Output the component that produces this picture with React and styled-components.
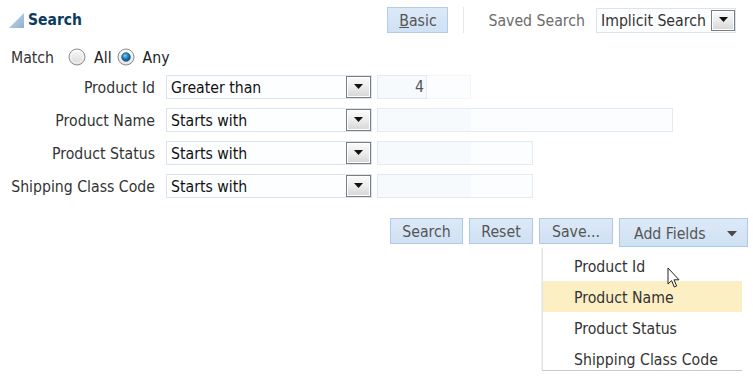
import React from "react";
import styled, { createGlobalStyle } from "styled-components";

const Global = createGlobalStyle`
  html, body { margin: 0; padding: 0; background: #fff; }
  body {
    font-family: "DejaVu Sans Condensed", "DejaVu Sans", sans-serif;
    font-stretch: condensed;
    font-size: 15.7px;
    color: #333;
  }
`;

const Page = styled.div`
  position: relative;
  width: 753px;
  height: 376px;
  padding: 7px 0 0 0;
  box-sizing: border-box;
  overflow: hidden;
`;

const Header = styled.div`
  display: flex;
  align-items: center;
  height: 26px;
  padding-left: 8px;
`;

const Title = styled.div`
  display: flex;
  align-items: center;
  gap: 3px;
  font-weight: bold;
  font-size: 15.5px;
  color: #0b3b5e;
  flex: 1;
`;

const Basic = styled.button`
  font: inherit;
  font-stretch: condensed;
  width: 61px;
  height: 26px;
  margin-right: 15px;
  background: linear-gradient(#dce9f7, #cfe1f4);
  border: 1px solid #b4cde6;
  color: #555;
  padding: 0;
  u { text-decoration: underline; }
`;

const VSep = styled.div`
  width: 1px;
  height: 26px;
  background: #e3e8ec;
  margin-right: 24px;
`;

const SavedLabel = styled.span`
  color: #6b6b6b;
  margin-right: 11px;
`;

const SelectBox = styled.div`
  display: flex;
  align-items: center;
  box-sizing: border-box;
  width: ${(p) => p.$w}px;
  height: ${(p) => p.$h || 24}px;
  border: 1px solid #d9e4ee;
  background: #fdfeff;
  padding-left: 4px;
  color: ${(p) => p.$color || "#111"};
`;

const SelectText = styled.span`
  flex: 1;
  white-space: nowrap;
  overflow: hidden;
`;

const ArrowBtn = styled.span`
  display: flex;
  align-items: center;
  justify-content: center;
  box-sizing: border-box;
  width: ${(p) => p.$w || 25}px;
  height: ${(p) => p.$h || 22}px;
  border: 1px solid #7d7d7d;
  box-shadow: inset 0 0 0 1px #fff;
  background: linear-gradient(#fbfbfb, #ececec 50%, #d6d6d6);
`;

const HeaderRight = styled.div`
  display: flex;
  align-items: center;
  margin-right: 17px;
`;

const MatchRow = styled.div`
  display: flex;
  align-items: center;
  height: 18px;
  margin: 15px 0 0 11px;
  color: #333;
`;

const MatchLabel = styled.span`
  margin-right: 14px;
`;

const RadioLabel = styled.span`
  margin: 0 5px 0 8px;
  color: #222;
`;

const Grid = styled.div`
  display: grid;
  grid-template-columns: 155px 217px auto;
  grid-auto-rows: 24px;
  row-gap: 9px;
  margin-top: 9px;
  align-items: center;
`;

const Label = styled.div`
  text-align: right;
  white-space: nowrap;
  color: #333;
`;

const SelCell = styled.div`
  padding-left: 11px;
  display: flex;
`;

const InputCell = styled.div`
  padding-left: 5px;
  display: flex;
`;

const InputBox = styled.div`
  box-sizing: border-box;
  width: ${(p) => p.$w}px;
  height: 24px;
  border: 1px solid #e3eaf1;
  background: linear-gradient(to right, #f7fafd 0, #f7fafd 93px, #fcfdfe 93px);
  text-align: right;
  padding-right: 2px;
  line-height: 22px;
  color: #555;
`;

const InputTail = styled.div`
  width: 44px;
  height: 24px;
  box-sizing: border-box;
  border: 1px solid #f3f6f9;
  border-left: none;
  background: #fcfdfe;
`;

const ButtonRow = styled.div`
  display: flex;
  gap: 6px;
  margin: 20px 0 0 390px;
  align-items: flex-start;
`;

const Btn = styled.button`
  font: inherit;
  font-stretch: condensed;
  box-sizing: border-box;
  height: ${(p) => p.$h || 26}px;
  width: ${(p) => p.$w}px;
  background: linear-gradient(#dde9f7, #cfe1f4);
  border: 1px solid #b0cae4;
  color: #555;
  display: flex;
  align-items: center;
  justify-content: ${(p) => (p.$split ? "space-between" : "center")};
  padding: ${(p) => (p.$split ? "2px 10px 0 14px" : "0")};
`;

const Menu = styled.div`
  position: absolute;
  left: 542px;
  top: 248px;
  width: 200px;
  height: 122px;
  background: #fff;
  border-left: 1px solid #e2e2e2;
  box-shadow: 0 1px 0 #c9c9c9, -1px 0 0 #f0f0f0;
  padding-top: 2px;
  box-sizing: border-box;
  overflow: hidden;
`;

const MenuItem = styled.div`
  height: 31px;
  line-height: 33px;
  padding-left: 31px;
  color: #333;
  background: ${(p) => (p.$hl ? "#fdefc4" : "transparent")};
  white-space: nowrap;
`;

const Cursor = styled.svg`
  position: absolute;
  left: 667px;
  top: 267px;
`;

const Caret = ({ size = 9, color = "#111" }) => (
  <svg width={size} height={size / 2 + 1} viewBox="0 0 10 6">
    <path d="M0 0 H10 L5 5.5 Z" fill={color} />
  </svg>
);

const Radio = ({ checked }) => (
  <svg width="18" height="18" viewBox="0 0 18 18">
    <defs>
      <linearGradient id={checked ? "rg1" : "rg0"} x1="0" y1="0" x2="0" y2="1">
        <stop offset="0" stopColor="#fafafa" />
        <stop offset="1" stopColor="#d8d8d8" />
      </linearGradient>
      <radialGradient id="dot" cx="0.4" cy="0.35" r="0.7">
        <stop offset="0" stopColor="#7fd0f5" />
        <stop offset="0.5" stopColor="#1c7fc0" />
        <stop offset="1" stopColor="#0c4a80" />
      </radialGradient>
    </defs>
    <circle cx="9" cy="9" r="8" fill={`url(#${checked ? "rg1" : "rg0"})`} stroke="#8e8e8e" strokeWidth="1" />
    <circle cx="9" cy="9" r="6.3" fill="none" stroke="#fff" strokeWidth="0.8" opacity="0.8" />
    {checked && <circle cx="9" cy="9" r="4.3" fill="url(#dot)" stroke="#0b3c66" strokeWidth="0.6" />}
  </svg>
);

const Disclose = () => (
  <svg width="17" height="17" viewBox="0 0 17 17">
    <defs>
      <linearGradient id="tri" x1="0" y1="0" x2="1" y2="1">
        <stop offset="0" stopColor="#c9dbec" />
        <stop offset="1" stopColor="#8fb0cf" />
      </linearGradient>
    </defs>
    <path d="M1 16 H16 V1 Z" fill="url(#tri)" />
  </svg>
);

const rows = [
  { label: "Product Id", op: "Greater than", w: 50, value: "4", tail: true },
  { label: "Product Name", op: "Starts with", w: 296 },
  { label: "Product Status", op: "Starts with", w: 156 },
  { label: "Shipping Class Code", op: "Starts with", w: 156 },
];

export default function App() {
  return (
    <>
      <Global />
      <Page>
        <Header>
          <Title>
            <Disclose />
            <span>Search</span>
          </Title>
          <HeaderRight>
            <Basic>
              <u>B</u>asic
            </Basic>
            <VSep />
            <SavedLabel>Saved Search</SavedLabel>
            <SelectBox $w={140} $h={25} $color="#333">
              <SelectText>Implicit Search</SelectText>
              <ArrowBtn $w={24} $h={21}>
                <Caret />
              </ArrowBtn>
            </SelectBox>
          </HeaderRight>
        </Header>
        <MatchRow>
          <MatchLabel>Match</MatchLabel>
          <Radio />
          <RadioLabel>All</RadioLabel>
          <Radio checked />
          <RadioLabel>Any</RadioLabel>
        </MatchRow>
        <Grid>
          {rows.map((r) => (
            <React.Fragment key={r.label}>
              <Label>{r.label}</Label>
              <SelCell>
                <SelectBox $w={206}>
                  <SelectText>{r.op}</SelectText>
                  <ArrowBtn>
                    <Caret />
                  </ArrowBtn>
                </SelectBox>
              </SelCell>
              <InputCell>
                <InputBox $w={r.w}>{r.value || ""}</InputBox>
                {r.tail && <InputTail />}
              </InputCell>
            </React.Fragment>
          ))}
        </Grid>
        <ButtonRow>
          <Btn $w={73}>Search</Btn>
          <Btn $w={64}>Reset</Btn>
          <Btn $w={74}>Save...</Btn>
          <Btn $w={129} $h={29} $split>
            <span>Add Fields</span>
            <Caret size={10} color="#4a4a4a" />
          </Btn>
        </ButtonRow>
        <Menu>
          <MenuItem>Product Id</MenuItem>
          <MenuItem $hl>Product Name</MenuItem>
          <MenuItem>Product Status</MenuItem>
          <MenuItem>Shipping Class Code</MenuItem>
        </Menu>
        <Cursor width="14" height="22" viewBox="0 0 14 22">
          <path
            d="M1 1 L1 17 L4.6 13.6 L7.3 20 L9.6 19 L7 12.8 L12 12.8 Z"
            fill="#fff"
            stroke="#222"
            strokeWidth="1"
            strokeLinejoin="round"
          />
        </Cursor>
      </Page>
    </>
  );
}
